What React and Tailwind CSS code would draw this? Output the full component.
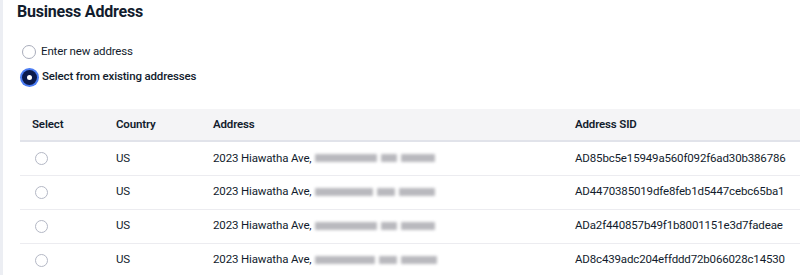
const rows = [
  { country: "US", sid: "AD85bc5e15949a560f092f6ad30b386786", blur: [62, 16, 34] },
  { country: "US", sid: "AD4470385019dfe8feb1d5447cebc65ba1", blur: [58, 18, 36] },
  { country: "US", sid: "ADa2f440857b49f1b8001151e3d7fadeae", blur: [62, 16, 34] },
  { country: "US", sid: "AD8c439adc204effddd72b066028c14530", blur: [60, 18, 36] },
];

function Radio({ checked }) {
  if (checked) {
    return (
      <span className="w-[15px] h-[15px] rounded-full bg-[#0b1a4d] ring-[2px] ring-[#4b7cf2] flex items-center justify-center shrink-0">
        <span className="w-[5px] h-[5px] rounded-full bg-white" />
      </span>
    );
  }
  return <span className="w-[14px] h-[14px] rounded-full border border-[#a9adbb] bg-white shrink-0" />;
}

export default function App() {
  return (
    <div className="w-[800px] h-[275px] overflow-hidden bg-white text-[#121c2d] font-['Roboto',sans-serif] border-l-[3px] border-[#eceef3]">
      <div className="pl-[14px]">
        <h2 className="text-[16px] font-bold pt-[1px] leading-[22px] tracking-[-0.2px]">Business Address</h2>

        <div className="mt-[22px] flex flex-col gap-[11px] pl-[5px] text-[11.5px] tracking-[-0.15px]">
          <label className="flex items-center gap-[5px] h-[14px]">
            <Radio />
            <span>Enter new address</span>
          </label>
          <label className="flex items-center gap-[5px] h-[14px]">
            <Radio checked />
            <span className="font-medium">Select from existing addresses</span>
          </label>
        </div>

        <table className="mt-[25px] ml-[3px] w-[783px] text-[11.5px] tracking-[-0.15px] border-collapse table-fixed">
          <thead>
            <tr className="bg-[#f4f4f6] border-b-2 border-[#e1e3ea] h-[32px]">
              <th className="text-left font-semibold pl-[12px] w-[84px]">Select</th>
              <th className="text-left font-semibold pl-[12px] w-[97px]">Country</th>
              <th className="text-left font-semibold pl-[12px] w-[362px]">Address</th>
              <th className="text-left font-semibold pl-[12px]">Address SID</th>
            </tr>
          </thead>
          <tbody>
            {rows.map((r, i) => (
              <tr key={i} className="border-b border-[#ececf0] h-[34px]">
                <td className="pl-[15px]">
                  <span className="flex items-center">
                    <span className="w-[13px] h-[13px] rounded-full border border-[#b4b8c5] bg-white" />
                  </span>
                </td>
                <td className="pl-[12px]">{r.country}</td>
                <td className="pl-[12px]">
                  <span className="flex items-center gap-[4px]">
                    <span>2023 Hiawatha Ave,</span>
                    <span className="flex items-center gap-[4px] blur-[1.5px]">
                      {r.blur.map((w, j) => (
                        <span key={j} className="h-[8px] bg-[#b9b9be] rounded-[1px]" style={{ width: w }} />
                      ))}
                    </span>
                  </span>
                </td>
                <td className="pl-[12px]">{r.sid}</td>
              </tr>
            ))}
          </tbody>
        </table>
      </div>
    </div>
  );
}
